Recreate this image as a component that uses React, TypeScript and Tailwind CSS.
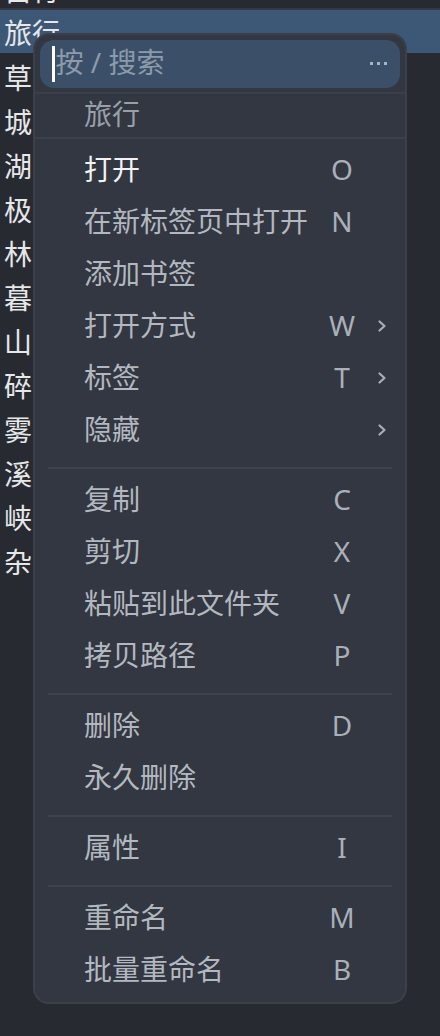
import React from "react";

type Item = { label: string; key?: string; sub?: boolean; strong?: boolean };

const groups: Item[][] = [
  [
    { label: "打开", key: "O", strong: true },
    { label: "在新标签页中打开", key: "N" },
    { label: "添加书签" },
    { label: "打开方式", key: "W", sub: true },
    { label: "标签", key: "T", sub: true },
    { label: "隐藏", sub: true },
  ],
  [
    { label: "复制", key: "C" },
    { label: "剪切", key: "X" },
    { label: "粘贴到此文件夹", key: "V" },
    { label: "拷贝路径", key: "P" },
  ],
  [
    { label: "删除", key: "D" },
    { label: "永久删除" },
  ],
  [{ label: "属性", key: "I" }],
  [
    { label: "重命名", key: "M" },
    { label: "批量重命名", key: "B" },
  ],
];

const folders = ["草", "城", "湖", "极", "林", "暮", "山", "碎", "雾", "溪", "峡", "杂"];

const font = { fontFamily: '"Noto Sans", "Noto Sans CJK SC", sans-serif' };

const Chevron = () => (
  <svg width="10" height="14" viewBox="0 0 10 14" fill="none">
    <path d="M2.5 2.5 L7.5 7 L2.5 11.5" stroke="#a9afb9" strokeWidth="2.2" strokeLinecap="round" strokeLinejoin="round" />
  </svg>
);

const MenuRow: React.FC<{ item: Item }> = ({ item }) => (
  <div className="flex h-[52px] items-center pb-[4px]">
    <div className={"flex-1 pl-[49px] " + (item.strong ? "text-[#f2f3f5]" : "text-[#b3b8c0]")}>
      {item.label}
    </div>
    <div className="w-[40px] text-center text-[#aab0ba]">{item.key}</div>
    <div className="ml-[8px] mr-[11px] flex w-[24px] justify-center pt-[2px]">{item.sub && <Chevron />}</div>
  </div>
);

export default function App() {
  return (
    <div className="relative h-[1036px] w-[440px] overflow-hidden bg-[#272a31] text-[28px] leading-none" style={font}>
      {/* background file list */}
      <div className="flex flex-col">
        <div className="mt-[-28px] flex h-[36px] items-center pl-[4px] text-[#e6e7e9]">自行</div>
        <div className="h-[2px] bg-[#353944]" />
        <div className="flex h-[43px] items-center bg-[#3d5876] pl-[4px] pt-[2px] text-[#e6e7e9]">旅行</div>
        {folders.map((f) => (
          <div key={f} className="flex h-[44px] items-center pl-[4px] pt-[5px] text-[#e6e7e9]">
            {f}
          </div>
        ))}
      </div>

      {/* context menu */}
      <div className="absolute left-[33px] top-[33px] w-[374px] rounded-[16px] border-2 border-[#3b404b] bg-[#323741] pb-[5px]">
        <div className="px-[5px] pt-[5px]">
          <div className="flex h-[48px] items-center rounded-[14px] bg-[#3b5068] pl-[12px] pr-[12px]">
            <div className="h-[36px] w-[2.5px] bg-white" />
            <div className="ml-[1px] flex-1 pb-[4px] text-[#8c9aac]">按 / 搜索</div>
            <svg width="18" height="4" viewBox="0 0 18 4">
              <rect x="0" y="0" width="3" height="3" fill="#a8b4c4" />
              <rect x="7" y="0" width="3" height="3" fill="#a8b4c4" />
              <rect x="14" y="0" width="3" height="3" fill="#a8b4c4" />
            </svg>
          </div>
        </div>
        <div className="mt-[4px] h-[2px] bg-[#3b404b]" />
        <div className="flex h-[43px] items-center pb-[4px] pl-[49px] text-[#9aa0a9]">旅行</div>
        <div className="h-[2px] bg-[#3b404b]" />
        <div className="pt-[6px]">
          {groups.map((g, gi) => (
            <div key={gi}>
              {gi > 0 && <div className="mx-[13px] mb-[6px] mt-[10px] h-[2px] bg-[#3d424d]" />}
              {g.map((it) => (
                <MenuRow key={it.label} item={it} />
              ))}
            </div>
          ))}
        </div>
      </div>
    </div>
  );
}
